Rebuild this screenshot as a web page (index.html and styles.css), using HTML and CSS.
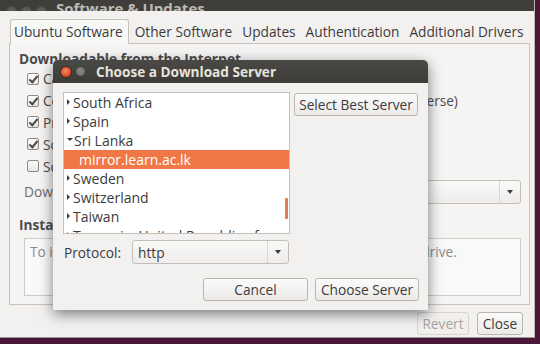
FILE: index.html
```html
<!DOCTYPE html>
<html>
<head>
<meta charset="utf-8">
<link rel="stylesheet" href="styles.css">
</head>
<body>
<div class="window">
  <div class="wm-title">
    <div class="wm-btns"><span></span><span></span><span></span></div>
    <span class="wm-text">Software &amp; Updates</span>
  </div>
  <div class="content">
    <div class="tabs">
      <div class="tab active">Ubuntu Software</div>
      <div class="tab">Other Software</div>
      <div class="tab">Updates</div>
      <div class="tab">Authentication</div>
      <div class="tab">Additional Drivers</div>
    </div>
    <div class="panel">
      <div class="heading">Downloadable from the Internet</div>
      <ul class="checks">
        <li><span class="cb on"></span>Canonical-supported free and open-source software (main)</li>
        <li><span class="cb on"></span>Community-maintained free and open-source software (universe)</li>
        <li><span class="cb on"></span>Proprietary drivers for devices (restricted)</li>
        <li><span class="cb on"></span>Software restricted by copyright or legal issues (multiverse)</li>
        <li><span class="cb"></span>Source code</li>
      </ul>
      <div class="dl-row">
        <span class="dl-label">Download from:</span>
        <div class="combo wide"><span class="combo-text">Main server</span><span class="combo-btn"><span class="tri"></span></span></div>
      </div>
      <div class="heading second">Installable from CD-ROM/DVD</div>
      <div class="cdbox">To install from a CD-ROM or DVD, insert the medium into the drive.</div>
    </div>
    <div class="actions">
      <button class="btn disabled">Revert</button>
      <button class="btn close">Close</button>
    </div>
  </div>
</div>

<div class="dialog">
  <div class="dlg-title">
    <span class="dot close-dot"></span><span class="dot min-dot"></span>
    <span class="dlg-text">Choose a Download Server</span>
  </div>
  <div class="dlg-body">
    <div class="top-row">
      <div class="tree">
        <div class="row"><span class="exp"></span>South Africa</div>
        <div class="row"><span class="exp"></span>Spain</div>
        <div class="row"><span class="exp open"></span>Sri Lanka</div>
        <div class="row child selected">mirror.learn.ac.lk</div>
        <div class="row"><span class="exp"></span>Sweden</div>
        <div class="row"><span class="exp"></span>Switzerland</div>
        <div class="row"><span class="exp"></span>Taiwan</div>
        <div class="row"><span class="exp"></span>Tanzania, United Republic of</div>
        <span class="scroll-ind"></span>
      </div>
      <button class="btn best">Select Best Server</button>
    </div>
    <div class="proto-row">
      <span class="proto-label">Protocol:</span>
      <div class="combo proto"><span class="combo-text">http</span><span class="combo-btn"><span class="tri"></span></span></div>
    </div>
    <div class="dlg-actions">
      <button class="btn cancel">Cancel</button>
      <button class="btn choose">Choose Server</button>
    </div>
  </div>
</div>
</body>
</html>
```

FILE: styles.css
```css
* { box-sizing: border-box; }
html, body { margin: 0; padding: 0; }
body {
  width: 540px;
  height: 344px;
  overflow: hidden;
  background: #4a1739;
  font-family: "Open Sans", "DejaVu Sans", sans-serif;
  font-size: 13.7px;
  color: #3c3c3c;
  position: relative;
}

.window {
  width: 535px;
  height: 338px;
  background: #f2f1f0;
  border-right: 1px solid #b9b5ae;
  border-bottom: 1px solid #9c9891;
  display: flex;
  flex-direction: column;
}

.wm-title {
  height: 11px;
  background: #3f3e3a;
  overflow: hidden;
  display: flex;
  align-items: flex-end;
  flex: none;
}
.wm-btns {
  display: flex;
  gap: 4px;
  margin-left: 6px;
  margin-bottom: -6px;
}
.wm-btns span {
  width: 11px;
  height: 11px;
  border-radius: 50%;
  background: #5b5a55;
  border: 1px solid #4a4945;
}
.wm-text {
  margin-left: 9px;
  font-weight: bold;
  font-size: 15px;
  line-height: 15px;
  color: #bdbab2;
  margin-bottom: -5px;
}

.content {
  flex: 1;
  padding: 8px 0 0 9px;
  display: flex;
  flex-direction: column;
}

.tabs {
  display: flex;
  height: 25px;
  margin-left: 1px;
  align-items: stretch;
}
.tab {
  padding: 0 5px 0 5px;
  line-height: 25px;
  white-space: nowrap;
  color: #3c3c3c;
  position: relative;
}
.tab.active {
  border: 1px solid #c4c1bb;
  border-bottom: none;
  border-radius: 3px 3px 0 0;
  background: #f7f7f6;
  line-height: 24px;
  padding-left: 3px;
  margin-right: 1px;
}

.panel {
  width: 521px;
  height: 262px;
  border: 1px solid #c7c4bf;
  background: #f5f4f3;
  padding: 7px 8px 0 9px;
  margin-top: -1px;
}

.heading {
  font-weight: bold;
  line-height: 16px;
  color: #4c4c4c;
}
.heading.second { margin-top: 13px; }

.checks {
  list-style: none;
  margin: 1px 0 0 0;
  padding: 0 0 0 8px;
}
.checks li {
  height: 21.8px;
  display: flex;
  align-items: center;
  white-space: nowrap;
  color: #4c4c4c;
  letter-spacing: -0.04px;
}
.cb {
  width: 12px;
  height: 12px;
  border: 1px solid #8d8b87;
  border-radius: 2px;
  background: linear-gradient(#fcfcfc, #e6e5e3);
  margin-right: 4px;
  flex: none;
  position: relative;
}
.cb.on::after {
  content: "";
  position: absolute;
  left: 3px;
  top: 0px;
  width: 3px;
  height: 7px;
  border-right: 2px solid #4a4a4a;
  border-bottom: 2px solid #4a4a4a;
  transform: rotate(40deg);
}

.dl-row {
  display: flex;
  align-items: center;
  margin-top: 3px;
  padding-left: 5px;
  height: 24px;
}
.dl-label { color: #6a6a6a; }

.combo {
  display: flex;
  align-items: center;
  height: 24px;
  border: 1px solid #c2bfb9;
  border-radius: 3px;
  background: linear-gradient(#f9f9f8, #eeedec);
}
.combo.wide { margin-left: auto; width: 380px; }
.combo-text { flex: 1; padding-left: 5px; }
.combo-btn {
  width: 21px;
  height: 100%;
  border-left: 1px solid #dad7d2;
  display: flex;
  align-items: center;
  justify-content: center;
}
.tri {
  width: 0; height: 0;
  border-left: 3px solid transparent;
  border-right: 3px solid transparent;
  border-top: 4px solid #3c3c3c;
}

.cdbox {
  margin: 5px 0 0 5px;
  height: 58px;
  border: 1px solid #cfccc7;
  background: #f9f9f9;
  padding: 3px 5px;
  color: #8a8a8a;
  white-space: nowrap;
  overflow: hidden;
}

.actions {
  display: flex;
  justify-content: flex-end;
  gap: 8px;
  margin-top: 7px;
  padding-right: 11px;
}

.btn {
  font-family: inherit;
  font-size: 13.7px;
  color: #3c3c3c;
  height: 23px;
  border: 1px solid #b9b6b0;
  border-radius: 3px;
  background: linear-gradient(#fbfbfb, #eceae8);
  padding: 0 4px;
  white-space: nowrap;
}
.btn.disabled {
  color: #a6a4a0;
  border-color: #d7d4cf;
  background: #f1f0ef;
  width: 52px;
}
.btn.close { width: 46px; }

/* dialog */
.dialog {
  position: absolute;
  left: 53px;
  top: 60px;
  width: 375px;
  height: 250px;
  background: #f2f1f0;
  border-radius: 5px 5px 0 0;
  box-shadow: 0 4px 14px rgba(0,0,0,0.5);
  display: flex;
  flex-direction: column;
}
.dlg-title {
  height: 23px;
  border-radius: 5px 5px 0 0;
  background: linear-gradient(#4a4945, #3c3b37);
  display: flex;
  align-items: center;
  padding-left: 7px;
  flex: none;
}
.dot {
  width: 12px;
  height: 12px;
  border-radius: 50%;
}
.close-dot {
  background: radial-gradient(circle at 45% 40%, #f58a62, #e0502a 60%, #b63a1a);
  border: 1px solid #3a2a22;
}
.min-dot {
  margin-left: 3px;
  width: 11px;
  height: 11px;
  background: radial-gradient(circle at 45% 40%, #8a8883, #6a6864);
  border: 1px solid #3a3935;
}
.dlg-text {
  margin-left: 10px;
  font-weight: bold;
  color: #e6e3dc;
  font-size: 13.6px;
}

.dlg-body {
  flex: 1;
  padding: 9px 9px 10px 10px;
  display: flex;
  flex-direction: column;
}
.top-row {
  display: flex;
  align-items: flex-start;
  gap: 4px;
}
.tree {
  width: 227px;
  height: 142px;
  border: 1px solid #c4c1bb;
  background: #ffffff;
  overflow: hidden;
  position: relative;
  font-size: 14px;
}
.row {
  height: 19px;
  line-height: 19px;
  padding-left: 3px;
  display: flex;
  align-items: center;
  white-space: nowrap;
  color: #3c3c3c;
}
.row.child { padding-left: 15px; }
.row.selected { background: #f07746; color: #ffffff; }
.exp {
  width: 0; height: 0;
  border-top: 3px solid transparent;
  border-bottom: 3px solid transparent;
  border-left: 3px solid #3c3c3c;
  margin-right: 3px;
  margin-top: -2px;
}
.exp.open {
  border-left: 3px solid transparent;
  border-right: 3px solid transparent;
  border-top: 3px solid #3c3c3c;
  border-bottom: none;
  margin-right: 1px;
}
.scroll-ind {
  position: absolute;
  right: 1px;
  top: 105px;
  width: 3px;
  height: 21px;
  background: #e77a4b;
  border-radius: 1px;
}
.btn.best { width: 124px; margin-top: 1px; }

.proto-row {
  display: flex;
  align-items: center;
  margin-top: 6px;
  height: 24px;
}
.proto-label { width: 69px; padding-left: 1px; }
.combo.proto { width: 157px; }

.dlg-actions {
  display: flex;
  justify-content: flex-end;
  gap: 7px;
  margin-top: 14px;
}
.btn.cancel { width: 105px; }
.btn.choose { width: 104px; }
```
